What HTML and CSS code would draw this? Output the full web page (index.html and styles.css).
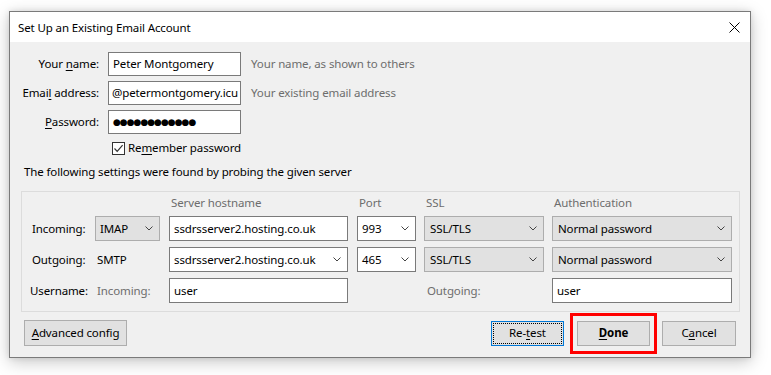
FILE: index.html
```html
<!DOCTYPE html>
<html lang="en">
<head>
<meta charset="utf-8">
<title>Set Up an Existing Email Account</title>
<link rel="stylesheet" href="styles.css">
</head>
<body>
<div class="window">
  <div class="titlebar">
    <span class="title">Set Up an Existing Email Account</span>
    <svg class="close" width="11" height="11" viewBox="0 0 11 11"><path d="M0.5 0.5 L10.5 10.5 M10.5 0.5 L0.5 10.5" stroke="#000" stroke-width="1" fill="none"/></svg>
  </div>
  <div class="content">
    <div class="identity">
      <label class="lbl">Your <u>n</u>ame:</label>
      <div class="field">Peter Montgomery</div>
      <span class="hint">Your name, as shown to others</span>

      <label class="lbl">Emai<u>l</u> address:</label>
      <div class="field clip">@petermontgomery.icu</div>
      <span class="hint">Your existing email address</span>

      <label class="lbl"><u>P</u>assword:</label>
      <div class="field dots">●●●●●●●●●●●●</div>
      <span class="hint"></span>

      <span></span>
      <div class="remember">
        <span class="checkbox"><svg width="11" height="11" viewBox="0 0 11 11"><path d="M1.5 5.5 L4.2 8.3 L9.6 2.2" stroke="#333" stroke-width="1.2" fill="none"/></svg></span>
        <span>Re<u>m</u>ember password</span>
      </div>
    </div>

    <p class="probe">The following settings were found by probing the given server</p>

    <div class="group">
      <span></span>
      <span></span>
      <span class="colhead">Server hostname</span>
      <span class="colhead">Port</span>
      <span class="colhead">SSL</span>
      <span class="colhead">Authentication</span>

      <span class="rowlbl">Incoming:</span>
      <div class="select w-type"><span>IMAP</span><svg class="chev" width="8" height="5" viewBox="0 0 8 5"><polyline points="0.5,0.5 4,4 7.5,0.5" stroke="#444" fill="none"/></svg></div>
      <div class="field w-host">ssdrsserver2.hosting.co.uk</div>
      <div class="field combo w-port"><span>993</span><svg class="chev" width="8" height="5" viewBox="0 0 8 5"><polyline points="0.5,0.5 4,4 7.5,0.5" stroke="#444" fill="none"/></svg></div>
      <div class="select w-ssl"><span>SSL/TLS</span><svg class="chev" width="8" height="5" viewBox="0 0 8 5"><polyline points="0.5,0.5 4,4 7.5,0.5" stroke="#444" fill="none"/></svg></div>
      <div class="select w-auth"><span>Normal password</span><svg class="chev" width="8" height="5" viewBox="0 0 8 5"><polyline points="0.5,0.5 4,4 7.5,0.5" stroke="#444" fill="none"/></svg></div>

      <span class="rowlbl">Outgoing:</span>
      <span class="proto">SMTP</span>
      <div class="field combo w-host"><span>ssdrsserver2.hosting.co.uk</span><svg class="chev" width="8" height="5" viewBox="0 0 8 5"><polyline points="0.5,0.5 4,4 7.5,0.5" stroke="#444" fill="none"/></svg></div>
      <div class="field combo w-port"><span>465</span><svg class="chev" width="8" height="5" viewBox="0 0 8 5"><polyline points="0.5,0.5 4,4 7.5,0.5" stroke="#444" fill="none"/></svg></div>
      <div class="select w-ssl"><span>SSL/TLS</span><svg class="chev" width="8" height="5" viewBox="0 0 8 5"><polyline points="0.5,0.5 4,4 7.5,0.5" stroke="#444" fill="none"/></svg></div>
      <div class="select w-auth"><span>Normal password</span><svg class="chev" width="8" height="5" viewBox="0 0 8 5"><polyline points="0.5,0.5 4,4 7.5,0.5" stroke="#444" fill="none"/></svg></div>

      <span class="rowlbl user">Username:</span>
      <span class="sub">Incoming:</span>
      <div class="field w-host">user</div>
      <span></span>
      <span class="sub out">Outgoing:</span>
      <div class="field w-auth">user</div>
    </div>

    <div class="buttons">
      <button class="btn w-adv"><u>A</u>dvanced config</button>
      <div class="spacer"></div>
      <button class="btn w-retest focused">Re-<u>t</u>est</button>
      <button class="btn w-done done"><u>D</u>one</button>
      <button class="btn w-cancel">C<u>a</u>ncel</button>
    </div>
  </div>
</div>
</body>
</html>
```

FILE: styles.css
```css
* { box-sizing: border-box; }
html, body { margin: 0; padding: 0; background: #ffffff; }
body {
  font-family: "Noto Sans", "Open Sans", sans-serif;
  font-size: 11.5px;
  letter-spacing: -0.12px;
  color: #000;
  width: 771px;
  height: 375px;
  overflow: hidden;
}
u { text-decoration: underline; text-underline-offset: 2px; text-decoration-thickness: 1px; }

.window {
  margin: 11px 0 0 9px;
  width: 742px;
  height: 347px;
  border: 1px solid #7a7a7a;
  background: #f0f0f0;
  box-shadow: 0 4px 16px rgba(0,0,0,0.22), 0 0 6px rgba(0,0,0,0.10);
  display: flex;
  flex-direction: column;
}
.titlebar {
  height: 30px;
  background: #ffffff;
  display: flex;
  align-items: center;
  justify-content: space-between;
  padding: 0 10px 0 8px;
}
.title { line-height: 16px; padding-top: 1px; }
.close { display: block; }

.content { padding: 10px 0 11px 0; display: flex; flex-direction: column; }

.identity {
  display: grid;
  grid-template-columns: 90px 133px 1fr;
  grid-template-rows: 24px 24px 24px 18px;
  column-gap: 8px;
  row-gap: 5px;
  align-items: center;
}
.lbl { text-align: right; padding-right: 1px; line-height: 16px; }
.field {
  height: 24px;
  border: 1px solid #7a7a7a;
  background: #fff;
  padding: 0 4px;
  line-height: 22px;
  white-space: nowrap;
  overflow: hidden;
}
.field.clip { padding-left: 3px; }
.dots { font-family: "DejaVu Sans", sans-serif; font-size: 9px; letter-spacing: -1px; }
.hint { color: #6d6d6d; padding-left: 2px; line-height: 16px; }

.remember {
  grid-column: 2 / 4;
  display: flex;
  align-items: center;
  gap: 3px;
  padding-left: 4px;
  line-height: 16px;
  white-space: nowrap;
}
.checkbox {
  width: 13px; height: 13px;
  border: 1px solid #333;
  background: #fff;
  display: flex; align-items: center; justify-content: center;
}
.checkbox svg { display: block; }

.probe { margin: 7px 0 0 14px; line-height: 16px; }

.group {
  margin: 11px 10px 0 11px;
  border: 1px solid #dcdcdc;
  padding: 4px 7px 8px 10px;
  display: grid;
  grid-template-columns: 63px 74px 188px 67px 128px 180px;
  grid-template-rows: 14px 25px 25px 25px;
  row-gap: 6px;
  align-items: center;
}
.colhead { color: #6d6d6d; padding-left: 2px; line-height: 16px; }
.rowlbl { line-height: 16px; }
.rowlbl.user { margin-left: -2px; }
.proto { padding-left: 2px; line-height: 16px; }
.sub { color: #6d6d6d; padding-left: 2px; line-height: 16px; }
.sub.out { padding-left: 3px; }

.group .field { height: 25px; line-height: 23px; }
.select {
  height: 25px;
  border: 1px solid #adadad;
  background: #e1e1e1;
  padding: 0 6px 0 5px;
  display: flex;
  align-items: center;
  justify-content: space-between;
  white-space: nowrap;
}
.combo { display: flex; align-items: center; justify-content: space-between; padding-right: 6px; }
.chev { display: block; flex: none; }
.w-type { width: 65px; padding-left: 4px; }
.w-host { width: 179px; }
.w-port { width: 59px; }
.w-ssl { width: 120px; }
.w-auth { width: 180px; }

.buttons {
  margin-top: 8px;
  padding: 0 14px;
  display: flex;
  align-items: center;
  gap: 12px;
}
.spacer { flex: 1; }
.btn {
  height: 26px;
  font-family: inherit;
  font-size: 11.5px;
  letter-spacing: -0.12px;
  color: #000;
  background: #e1e1e1;
  border: 1px solid #adadad;
  padding: 0;
  line-height: 16px;
}
.w-adv { width: 103px; }
.w-retest { width: 73px; height: 25px; margin-right: 1px; }
.w-done { width: 73px; height: 25px; }
.w-cancel { width: 74px; height: 25px; }
.focused { border-color: #0078d7; outline: 1px dotted #000; outline-offset: -3px; }
.done { font-weight: bold; position: relative; }
.done::after {
  content: "";
  position: absolute;
  top: -9px; bottom: -9px; left: -8px; right: -8px;
  border: 3px solid #ff0000;
}
```
